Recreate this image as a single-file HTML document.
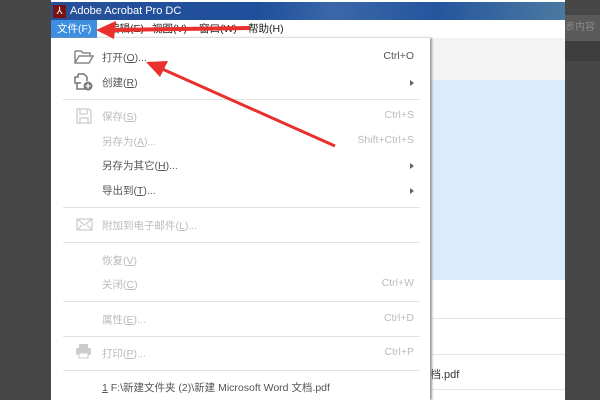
<!DOCTYPE html>
<html><head><meta charset="utf-8"><style>
*{margin:0;padding:0;box-sizing:border-box}
body{width:600px;height:400px;overflow:hidden;background:#474747;position:relative;font-family:"Liberation Sans","Noto Sans CJK SC",sans-serif}
.abs{position:absolute}
.title{left:51px;top:2px;width:514px;height:18px;background:linear-gradient(90deg,#27509a,#1f4f9c 40%,#3a67a8 55%,#25559e 75%,#4a7aa0);color:#fff;font-size:11px;line-height:18px}
.menubar{left:51px;top:20px;width:514px;height:18px;background:#fff;font-size:10.5px;line-height:18px;color:#222}
.menubar span{position:absolute}
.dd{left:52px;top:38px;width:378px;height:362px;background:#fff;box-shadow:2px 0 2px #999}
.it{position:absolute;left:50px;font-size:10.5px;color:#555}
.it.d{color:#bbb}
.sc{position:absolute;right:16px;font-size:10.5px;color:#555}
.sc.d{color:#bbb}
.ar{position:absolute;right:16px;width:0;height:0;border-left:4px solid #666;border-top:3px solid transparent;border-bottom:3px solid transparent}
.sep{position:absolute;left:11px;right:10px;height:1px;background:#e3e3e3}
</style></head><body>
<div class="abs" style="left:565px;top:15px;width:35px;height:26px;background:#5a5a5a;color:#888;font-size:10px;line-height:26px">表内容</div>
<div class="abs" style="left:565px;top:41px;width:35px;height:20px;background:#3e3e3e"></div>
<div class="abs" style="left:51px;top:0;width:514px;height:400px;background:#fff"></div>
<div class="abs" style="left:430px;top:38px;width:135px;height:42px;background:#f3f3f3"></div>
<div class="abs" style="left:430px;top:80px;width:135px;height:200px;background:#dcebfb"></div>
<div class="abs" style="left:430px;top:318px;width:135px;height:1px;background:#e6e6e6"></div>
<div class="abs" style="left:430px;top:354px;width:135px;height:1px;background:#e6e6e6"></div>
<div class="abs" style="left:430px;top:389px;width:135px;height:1px;background:#e6e6e6"></div>
<div class="abs" style="left:430px;top:366px;font-size:11px;color:#333">档.pdf</div>
<div class="abs title"><span style="display:inline-block;width:13px;height:13px;background:#7a1212;margin:3px 4px 0 2px;vertical-align:top;color:#fff;font-size:10px;line-height:13px;text-align:center">⅄</span>Adobe Acrobat Pro DC</div>
<div class="abs menubar">
<span style="left:0;width:46px;background:#3d8ee0;color:#fff;padding-left:6px">文件(F)</span>
<span style="left:58px">编辑(E)</span><span style="left:101px">视图(V)</span><span style="left:148px">窗口(W)</span><span style="left:197px">帮助(H)</span>
</div>
<div class="abs dd">
<svg class="abs" style="left:22px;top:11px" width="20" height="16" viewBox="0 0 20 16"><path d="M1 2h6l2 2h7v3M1 2v12h14l4-7H5L1 14" fill="none" stroke="#888" stroke-width="1.5"/></svg>
<div class="it" style="top:12px">打开(<u>O</u>)...</div><div class="sc" style="top:12px">Ctrl+O</div>
<svg class="abs" style="left:22px;top:35px" width="20" height="18" viewBox="0 0 20 18"><path d="M4 1h6l3 3v4M4 1v3H1v6h6M3 10v6h8" fill="none" stroke="#777" stroke-width="1.5"/><circle cx="14" cy="13" r="4.5" fill="#777"/><path d="M14 10.5v5M11.5 13h5" stroke="#fff" stroke-width="1.3"/></svg>
<div class="it" style="top:37px">创建(<u>R</u>)</div><div class="ar" style="top:42px"></div>
<div class="sep" style="top:61px"></div>
<svg class="abs" style="left:24px;top:70px" width="16" height="16" viewBox="0 0 16 16"><path d="M1 1h12l2 2v12H1z M4 1v5h7V1 M4 15v-5h8v5" fill="none" stroke="#ccc" stroke-width="1.3"/></svg>
<div class="it d" style="top:71px">保存(<u>S</u>)</div><div class="sc d" style="top:71px">Ctrl+S</div>
<div class="it d" style="top:96px">另存为(<u>A</u>)...</div><div class="sc d" style="top:96px">Shift+Ctrl+S</div>
<div class="it" style="top:120px">另存为其它(<u>H</u>)...</div><div class="ar" style="top:125px"></div>
<div class="it" style="top:145px">导出到(<u>T</u>)...</div><div class="ar" style="top:150px"></div>
<div class="sep" style="top:169px"></div>
<svg class="abs" style="left:24px;top:180px" width="17" height="13" viewBox="0 0 17 13"><path d="M1 1h15v11H1z M1 1l7.5 6L16 1 M1 12l5-5 M16 12l-5-5" fill="none" stroke="#ccc" stroke-width="1.2"/></svg>
<div class="it d" style="top:180px">附加到电子邮件(<u>L</u>)...</div>
<div class="sep" style="top:204px"></div>
<div class="it d" style="top:215px">恢复(<u>V</u>)</div>
<div class="it d" style="top:239px">关闭(<u>C</u>)</div><div class="sc d" style="top:239px">Ctrl+W</div>
<div class="sep" style="top:263px"></div>
<div class="it d" style="top:274px">属性(<u>E</u>)...</div><div class="sc d" style="top:274px">Ctrl+D</div>
<div class="sep" style="top:298px"></div>
<svg class="abs" style="left:23px;top:305px" width="17" height="16" viewBox="0 0 17 16"><rect x="4" y="1" width="9" height="4" fill="#ccc"/><rect x="1" y="5" width="15" height="7" rx="2" fill="#ccc"/><rect x="4" y="10" width="9" height="5" fill="#fff" stroke="#ccc"/></svg>
<div class="it d" style="top:308px">打印(<u>P</u>)...</div><div class="sc d" style="top:308px">Ctrl+P</div>
<div class="sep" style="top:332px"></div>
<div class="it" style="top:342px"><u>1</u> F:\新建文件夹 (2)\新建 Microsoft Word 文档.pdf</div>
</div>
<svg class="abs" style="left:0;top:0" width="600" height="400">
<path d="M250 28 L110 30" stroke="#e8302c" stroke-width="4"/>
<polygon points="96,30 116,21 114,39" fill="#e8302c"/>
<path d="M335 146 L160 68" stroke="#e8302c" stroke-width="3"/>
<polygon points="146,62 168,61 160,77" fill="#e8302c"/>
</svg>
</body></html>
